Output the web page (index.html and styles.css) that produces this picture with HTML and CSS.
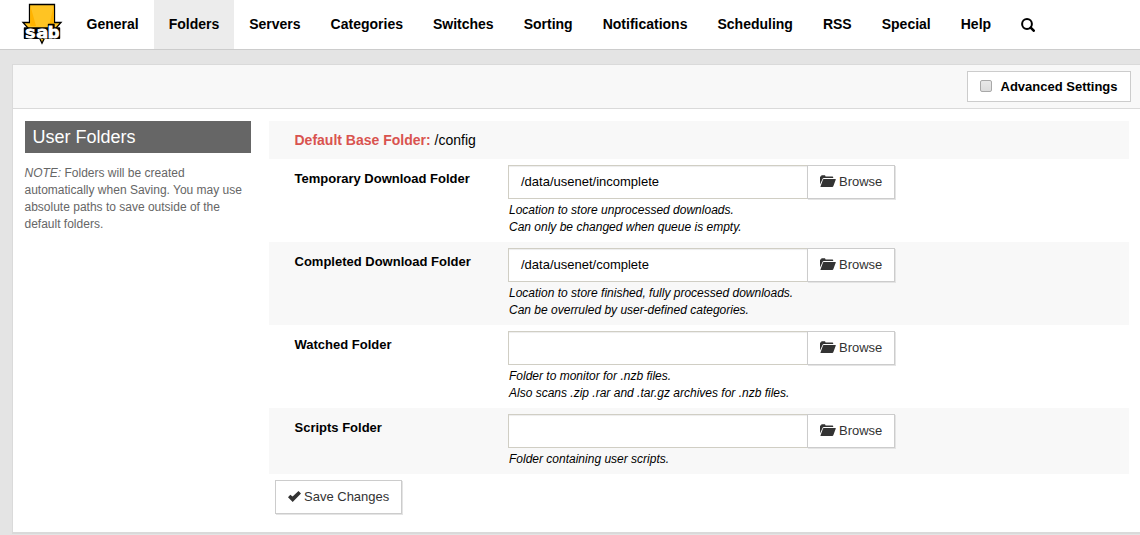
FILE: index.html
```html
<!DOCTYPE html>
<html lang="en">
<head>
<meta charset="utf-8">
<title>SABnzbd - Folders</title>
<link rel="stylesheet" href="styles.css">
</head>
<body>
<svg class="sprite" aria-hidden="true">
  <symbol id="folder-open" viewBox="0 0 16 12">
    <path d="M0 9.500V1.500H1L1.500 .3H5L5.600 1.500H12.500Q13.200 1.500 13.200 2.300V3H4Q3 3 2.600 3.800Z"/>
    <path d="M3.700 3.900H15.400Q16 3.900 15.800 4.500L13.300 11.300Q13 12 12.300 12H.8Q.3 12 .5 11.400L3 4.500Q3.200 3.900 3.700 3.900Z"/>
  </symbol>
</svg>
<header class="navbar">
  <a class="brand" href="#">
    <svg width="42" height="45" viewBox="0 0 42 45">
      <path class="arrow" d="M8.500 4.500H33.500V22.500H40L35 28V35H25L21 43.300L17 35H7V28L2 22.500H8.500Z"/>
      <path class="arrow-shade" d="M9.200 5.200L15 26H9.200ZM32.800 5.200L28 26H32.800Z"/>
      <path class="plate" d="M3.500 28H27.500V24.500H33V28H38.500V38.300H3.500Z"/>
      <text class="wordmark" x="3.500" y="37.500" textLength="35" lengthAdjust="spacingAndGlyphs">sab</text>
    </svg>
  </a>
  <nav class="menu">
    <a href="#">General</a><a class="active" href="#">Folders</a><a href="#">Servers</a><a href="#">Categories</a><a href="#">Switches</a><a href="#">Sorting</a><a href="#">Notifications</a><a href="#">Scheduling</a><a href="#">RSS</a><a href="#">Special</a><a href="#">Help</a><a href="#" aria-label="Search"><svg class="search" width="14" height="14" viewBox="0 0 14 14"><circle cx="6" cy="6" r="4.900"/><path d="M9.700 9.700L12.700 12.700"/></svg></a>
  </nav>
</header>
<main class="panel">
  <div class="toolbar">
    <label class="advanced"><span class="checkbox"></span>Advanced Settings</label>
  </div>
  <div class="content">
    <aside class="info">
      <h3>User Folders</h3>
      <p><i>NOTE:</i> Folders will be created automatically when Saving. You may use absolute paths to save outside of the default folders.</p>
    </aside>
    <form class="fields">
      <div class="base"><b>Default Base Folder:</b> /config</div>
      <div class="row">
        <label>Temporary Download Folder</label>
        <div>
          <div class="group"><div class="input">/data/usenet/incomplete</div><div class="btn"><svg class="icon" width="16" height="12"><use href="#folder-open"/></svg>Browse</div></div>
          <div class="desc">Location to store unprocessed downloads.<br>Can only be changed when queue is empty.</div>
        </div>
      </div>
      <div class="row">
        <label>Completed Download Folder</label>
        <div>
          <div class="group"><div class="input">/data/usenet/complete</div><div class="btn"><svg class="icon" width="16" height="12"><use href="#folder-open"/></svg>Browse</div></div>
          <div class="desc">Location to store finished, fully processed downloads.<br>Can be overruled by user-defined categories.</div>
        </div>
      </div>
      <div class="row">
        <label>Watched Folder</label>
        <div>
          <div class="group"><div class="input"></div><div class="btn"><svg class="icon" width="16" height="12"><use href="#folder-open"/></svg>Browse</div></div>
          <div class="desc">Folder to monitor for .nzb files.<br>Also scans .zip .rar and .tar.gz archives for .nzb files.</div>
        </div>
      </div>
      <div class="row">
        <label>Scripts Folder</label>
        <div>
          <div class="group"><div class="input"></div><div class="btn"><svg class="icon" width="16" height="12"><use href="#folder-open"/></svg>Browse</div></div>
          <div class="desc">Folder containing user scripts.</div>
        </div>
      </div>
      <div class="btn save"><svg class="icon" width="13" height="11" viewBox="0 0 13 11"><path d="M0 6.300L2.300 3.700L4.600 5.600L10.500 0L13 2.600L4.700 11Z"/></svg>Save Changes</div>
    </form>
  </div>
</main>
</body>
</html>
```
FILE: styles.css
```css
* { box-sizing: border-box; }
body {
  margin: 0;
  height: 535px;
  overflow: hidden;
  background: #e4e4e4;
  color: #000;
  font: 13px/17px "Liberation Sans", Arial, sans-serif;
}
.sprite { display: none; }
.navbar {
  display: flex;
  height: 50px;
  background: #fff;
  border-bottom: 1px solid #ccc;
}
.brand { width: 71.5px; padding-left: 21px; flex: none; }
.brand svg { display: block; }
.arrow { fill: #ffc423; stroke: #000; stroke-width: 1.3; }
.arrow-shade { fill: #ffb300; }
.plate { fill: #000; stroke: #000; stroke-width: 1.4; stroke-linejoin: round; }
.wordmark {
  font: bold 16px "DejaVu Sans Mono", monospace;
  fill: #fff;
  stroke: #fff;
  stroke-width: .8;
}
.menu { display: flex; }
.menu a {
  padding: 0 15px;
  color: #000;
  font-size: 14px;
  font-weight: bold;
  line-height: 48px;
  text-decoration: none;
}
.menu .active { background: #ececec; }
.search { vertical-align: -3px; fill: none; stroke: #000; stroke-width: 2; }
.search path { stroke-width: 2.6; stroke-linecap: round; }
.panel {
  width: 1140px;
  height: 470px;
  margin: 14px 0 0 12px;
  background: #fff;
  border: 1px solid #dadada;
  border-bottom: 2px solid #dadada;
}
.toolbar {
  display: flex;
  justify-content: flex-end;
  height: 44px;
  padding: 6px 20px 0 0;
  background: #f8f8f8;
  border-bottom: 1px solid #dadada;
}
.advanced {
  display: flex;
  align-items: center;
  width: 164px;
  height: 31px;
  padding-left: 12px;
  background: #fff;
  border: 1px solid #ccc;
  font-weight: bold;
}
.checkbox {
  width: 12px;
  height: 12px;
  margin: 0 8.500px 1px 0;
  border: 1px solid #a8a8a8;
  border-radius: 2px;
  background: linear-gradient(#e8e8e8, #dcdcdc);
}
.content { display: flex; padding: 12px 0 0 12px; }
.info { width: 226px; margin-right: 18px; flex: none; }
.info h3 {
  margin: 0 0 12px;
  padding-left: 7.500px;
  background: #666;
  color: #fff;
  font-size: 18px;
  font-weight: normal;
  line-height: 32px;
}
.info p { margin: 0 0 0 -.5px; color: #666; font-size: 12px; }
.fields { width: 860px; }
.base {
  height: 38px;
  padding-left: 25.500px;
  background: #f8f8f8;
  font-size: 14px;
  line-height: 38px;
}
.base b { color: #d9534f; }
.row { display: flex; padding: 6px 0 6px 25.500px; }
.row:nth-child(odd) { background: #f8f8f8; }
.row label { width: 213.500px; padding-top: 5px; font-weight: bold; }
.group { display: flex; height: 34px; }
.input {
  width: 299px;
  padding-left: 12px;
  background: #fff;
  border: 1px solid #d0cec4;
  border-right: 0;
  box-shadow: inset 0 1px 1px rgba(0, 0, 0, .075);
  line-height: 32px;
}
.btn {
  width: 88px;
  height: 34px;
  padding-left: 12px;
  background: #fff;
  border: 1px solid #ccc;
  box-shadow: 1px 1px 0 #e4e4e4;
  color: #333;
  line-height: 32px;
}
.icon { margin-right: 3px; fill: #333; vertical-align: -1px; }
.desc { padding: 3px 0 0 1px; font-size: 12px; font-style: italic; }
.save { width: 127px; margin: 6px 0 0 6px; }
```
